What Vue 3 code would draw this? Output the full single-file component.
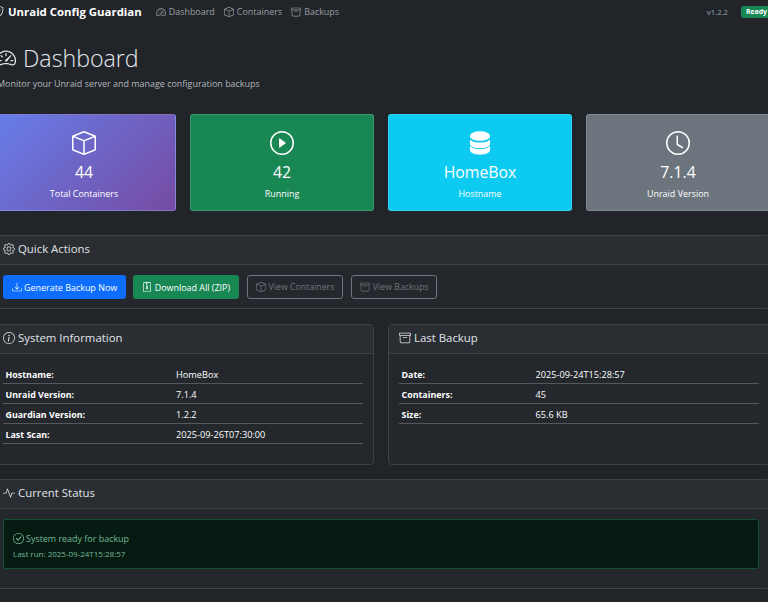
<script setup>
import { h } from 'vue'

const ring = 'M8 15A7 7 0 1 1 8 1a7 7 0 0 1 0 14zm0 1A8 8 0 1 0 8 0a8 8 0 0 0 0 16z'
const paths = {
  shield: ['M5.338 1.59a61.44 61.44 0 0 0-2.837.856.481.481 0 0 0-.328.39c-.554 4.157.726 7.19 2.253 9.188a10.725 10.725 0 0 0 2.287 2.233c.346.244.652.42.893.533.12.057.218.095.293.118a.55.55 0 0 0 .101.025.615.615 0 0 0 .1-.025c.076-.023.174-.061.294-.118.24-.113.547-.29.893-.533a10.726 10.726 0 0 0 2.287-2.233c1.527-1.997 2.807-5.031 2.253-9.188a.48.48 0 0 0-.328-.39c-.651-.213-1.75-.56-2.837-.855C9.552 1.29 8.531 1.067 8 1.067c-.53 0-1.552.223-2.662.524zM5.072.56C6.157.265 7.31 0 8 0s1.843.265 2.928.56c1.11.3 2.229.655 2.887.87a1.54 1.54 0 0 1 1.044 1.262c.596 4.477-.787 7.795-2.465 9.99a11.775 11.775 0 0 1-2.517 2.453 7.159 7.159 0 0 1-1.048.625c-.28.132-.581.24-.829.24s-.548-.108-.829-.24a7.158 7.158 0 0 1-1.048-.625 11.777 11.777 0 0 1-2.517-2.453C1.928 10.487.545 7.169 1.141 2.692A1.54 1.54 0 0 1 2.185 1.43 62.456 62.456 0 0 1 5.072.56z', 'M10.854 5.146a.5.5 0 0 1 0 .708l-3 3a.5.5 0 0 1-.708 0l-1.5-1.5a.5.5 0 1 1 .708-.708L7.5 7.793l2.646-2.647a.5.5 0 0 1 .708 0z'],
  speed: ['M8 4a.5.5 0 0 1 .5.5V6a.5.5 0 0 1-1 0V4.5A.5.5 0 0 1 8 4zM3.732 5.732a.5.5 0 0 1 .707 0l.915.914a.5.5 0 1 1-.708.708l-.914-.915a.5.5 0 0 1 0-.707zM2 10a.5.5 0 0 1 .5-.5h1.586a.5.5 0 0 1 0 1H2.5A.5.5 0 0 1 2 10zm9.5 0a.5.5 0 0 1 .5-.5h1.5a.5.5 0 0 1 0 1H12a.5.5 0 0 1-.5-.5zm.754-4.246a.389.389 0 0 0-.527-.02L7.547 9.31a.91.91 0 1 0 1.302 1.258l3.434-4.297a.389.389 0 0 0-.029-.518z', 'M0 10a8 8 0 1 1 15.547 2.661c-.442 1.253-1.845 1.602-2.932 1.25C11.309 13.488 9.475 13 8 13c-1.474 0-3.31.488-4.615.911-1.087.352-2.49.003-2.932-1.25A7.988 7.988 0 0 1 0 10zm8-7a7 7 0 0 0-6.603 9.329c.203.575.923.876 1.68.63C4.397 12.533 6.358 12 8 12s3.604.532 4.923.96c.757.245 1.477-.056 1.68-.631A7 7 0 0 0 8 3z'],
  box: ['M8.186 1.113a.5.5 0 0 0-.372 0L1.846 3.5 8 5.961 14.154 3.5 8.186 1.113zM15 4.239l-6.5 2.6v7.922l6.5-2.6V4.24zM7.5 14.762V6.838L1 4.239v7.925l6.5 2.6zM7.443.184a1.5 1.5 0 0 1 1.114 0l7.129 2.852A.5.5 0 0 1 16 3.5v8.662a1 1 0 0 1-.629.928l-7.185 2.874a.5.5 0 0 1-.372 0L.63 13.09a1 1 0 0 1-.63-.928V3.5a.5.5 0 0 1 .314-.464L7.443.184z'],
  archive: ['M0 2a1 1 0 0 1 1-1h14a1 1 0 0 1 1 1v2a1 1 0 0 1-1 1v7.5a2.5 2.5 0 0 1-2.5 2.5h-9A2.5 2.5 0 0 1 1 12.5V5a1 1 0 0 1-1-1V2zm2 3v7.5A1.5 1.5 0 0 0 3.5 14h9a1.5 1.5 0 0 0 1.5-1.5V5H2zm13-3H1v2h14V2zM5 7.5a.5.5 0 0 1 .5-.5h5a.5.5 0 0 1 0 1h-5a.5.5 0 0 1-.5-.5z'],
  play: [ring, 'M6.271 5.055a.5.5 0 0 1 .52.038l3.5 2.5a.5.5 0 0 1 0 .814l-3.5 2.5A.5.5 0 0 1 6 10.5v-5a.5.5 0 0 1 .271-.445z'],
  db: ['M8 .2C4.3.2 1.3 1.6 1.3 3.4S4.3 6.6 8 6.6s6.7-1.4 6.7-3.2S11.7.2 8 .2Z', 'M1.3 5.6v2.9c0 1.7 3 3 6.7 3s6.7-1.3 6.7-3V5.6C13.3 7.2 10.9 7.7 8 7.7S2.7 7.2 1.3 5.6Z', 'M1.3 9.9v2.8c0 1.8 3 3.1 6.7 3.1s6.7-1.3 6.7-3.1V9.9C13.3 11.5 10.9 12.2 8 12.2S2.7 11.5 1.3 9.9Z'],
  clock: ['M8 3.5a.5.5 0 0 0-1 0V9a.5.5 0 0 0 .252.434l3.5 2a.5.5 0 0 0 .496-.868L8 8.71V3.5z', 'M8 16A8 8 0 1 0 8 0a8 8 0 0 0 0 16zm7-8A7 7 0 1 1 1 8a7 7 0 0 1 14 0z'],
  gear: ['M8 4.754a3.246 3.246 0 1 0 0 6.492 3.246 3.246 0 0 0 0-6.492zM5.754 8a2.246 2.246 0 1 1 4.492 0 2.246 2.246 0 0 1-4.492 0z', 'M9.796 1.343c-.527-1.79-3.065-1.79-3.592 0l-.094.319a.873.873 0 0 1-1.255.52l-.292-.16c-1.64-.892-3.433.902-2.54 2.541l.159.292a.873.873 0 0 1-.52 1.255l-.319.094c-1.79.527-1.79 3.065 0 3.592l.319.094a.873.873 0 0 1 .52 1.255l-.16.292c-.892 1.64.901 3.434 2.541 2.54l.292-.159a.873.873 0 0 1 1.255.52l.094.319c.527 1.79 3.065 1.79 3.592 0l.094-.319a.873.873 0 0 1 1.255-.52l.292.16c1.64.893 3.434-.902 2.54-2.541l-.159-.292a.873.873 0 0 1 .52-1.255l.319-.094c1.79-.527 1.79-3.065 0-3.592l-.319-.094a.873.873 0 0 1-.52-1.255l.16-.292c.893-1.64-.902-3.433-2.541-2.54l-.292.159a.873.873 0 0 1-1.255-.52l-.094-.319zm-2.633.283c.246-.835 1.428-.835 1.674 0l.094.319a1.873 1.873 0 0 0 2.693 1.115l.291-.16c.764-.415 1.6.42 1.184 1.185l-.159.292a1.873 1.873 0 0 0 1.116 2.692l.318.094c.835.246.835 1.428 0 1.674l-.319.094a1.873 1.873 0 0 0-1.115 2.693l.16.291c.415.764-.42 1.6-1.185 1.184l-.291-.159a1.873 1.873 0 0 0-2.693 1.116l-.094.318c-.246.835-1.428.835-1.674 0l-.094-.319a1.873 1.873 0 0 0-2.692-1.115l-.292.16c-.764.415-1.6-.42-1.184-1.185l.159-.291A1.873 1.873 0 0 0 1.945 8.93l-.319-.094c-.835-.246-.835-1.428 0-1.674l.319-.094A1.873 1.873 0 0 0 3.06 4.377l-.16-.292c-.415-.764.42-1.6 1.185-1.184l.292.159a1.873 1.873 0 0 0 2.692-1.115l.094-.319z'],
  download: ['M.5 9.9a.5.5 0 0 1 .5.5v2.5a1 1 0 0 0 1 1h12a1 1 0 0 0 1-1v-2.5a.5.5 0 0 1 1 0v2.5a2 2 0 0 1-2 2H2a2 2 0 0 1-2-2v-2.5a.5.5 0 0 1 .5-.5z', 'M7.646 11.854a.5.5 0 0 0 .708 0l3-3a.5.5 0 0 0-.708-.708L8.5 10.293V1.5a.5.5 0 0 0-1 0v8.793L5.354 8.146a.5.5 0 1 0-.708.708l3 3z'],
  zip: ['M6.5 7.5a1 1 0 0 1 1-1h1a1 1 0 0 1 1 1v.938l.4 1.599a1 1 0 0 1-.416 1.074l-.93.62a1 1 0 0 1-1.109 0l-.93-.62a1 1 0 0 1-.415-1.074l.4-1.599V7.5zm2 0h-1v.938a1 1 0 0 1-.03.243l-.4 1.598.93.62.93-.62-.4-1.598a1 1 0 0 1-.03-.243V7.5z', 'M2 2a2 2 0 0 1 2-2h8a2 2 0 0 1 2 2v12a2 2 0 0 1-2 2H4a2 2 0 0 1-2-2V2zm5.5-1H4a1 1 0 0 0-1 1v12a1 1 0 0 0 1 1h8a1 1 0 0 0 1-1V2a1 1 0 0 0-1-1H9v1H8v1h1v1H8v1h1v1H7.5V5h-1V4h1V3h-1V2h1V1z'],
  info: [ring, 'm8.93 6.588-2.29.287-.082.38.45.083c.294.07.352.176.288.469l-.738 3.468c-.194.897.105 1.319.808 1.319.545 0 1.178-.252 1.465-.598l.088-.416c-.2.176-.492.246-.686.246-.275 0-.375-.193-.304-.533L8.93 6.588zM9 4.5a1 1 0 1 1-2 0 1 1 0 0 1 2 0z'],
  activity: ['M6 2a.5.5 0 0 1 .47.33L10 12.036l1.53-4.208A.5.5 0 0 1 12 7.5h3.5a.5.5 0 0 1 0 1h-3.15l-1.88 5.17a.5.5 0 0 1-.94 0L6 3.964 4.47 8.171A.5.5 0 0 1 4 8.5H.5a.5.5 0 0 1 0-1h3.15l1.88-5.17A.5.5 0 0 1 6 2Z'],
  check: [ring, 'M10.97 4.97a.235.235 0 0 0-.02.022L7.477 9.417 5.384 7.323a.75.75 0 0 0-1.06 1.06L6.97 11.03a.75.75 0 0 0 1.079-.02l3.992-4.99a.75.75 0 0 0-1.071-1.05z']
}

const Icon = (props) => h('svg', { viewBox: '0 0 16 16', fill: 'currentColor', 'fill-rule': 'evenodd' },
  paths[props.name].map((d) => h('path', { d })))
Icon.props = ['name']

const navItems = [
  { icon: 'speed', label: 'Dashboard' },
  { icon: 'box', label: 'Containers' },
  { icon: 'archive', label: 'Backups' }
]
const stats = [
  { icon: 'box', value: '44', label: 'Total Containers', tone: 'grad' },
  { icon: 'play', value: '42', label: 'Running', tone: 'green' },
  { icon: 'db', value: 'HomeBox', label: 'Hostname', tone: 'cyan' },
  { icon: 'clock', value: '7.1.4', label: 'Unraid Version', tone: 'grey' }
]
const actions = [
  { icon: 'download', label: 'Generate Backup Now', tone: 'blue' },
  { icon: 'zip', label: 'Download All (ZIP)', tone: 'dl' },
  { icon: 'box', label: 'View Containers', tone: 'ghost' },
  { icon: 'archive', label: 'View Backups', tone: 'ghost' }
]
const sysRows = [
  ['Hostname:', 'HomeBox'],
  ['Unraid Version:', '7.1.4'],
  ['Guardian Version:', '1.2.2'],
  ['Last Scan:', '2025-09-26T07:30:00']
]
const backupRows = [
  ['Date:', '2025-09-24T15:28:57'],
  ['Containers:', '45'],
  ['Size:', '65.6 KB']
]
</script>

<template>
  <div class="viewport">
    <div class="page">
      <nav class="nav">
        <div class="brand"><Icon name="shield" class="brand-ic" /><span>Unraid Config Guardian</span></div>
        <a v-for="n in navItems" :key="n.label" class="nav-link"><Icon :name="n.icon" class="nav-ic" />{{ n.label }}</a>
        <span class="version">v1.2.2</span>
        <span class="badge">Ready</span>
      </nav>

      <header class="head">
        <h1><Icon name="speed" class="h1-ic" />Dashboard</h1>
        <p>Monitor your Unraid server and manage configuration backups</p>
      </header>

      <section class="stats">
        <div v-for="s in stats" :key="s.label" class="stat" :class="s.tone">
          <Icon :name="s.icon" class="stat-ic" />
          <div class="stat-val">{{ s.value }}</div>
          <div class="stat-lab">{{ s.label }}</div>
        </div>
      </section>

      <section class="card wide">
        <h2 class="card-head"><Icon name="gear" class="head-ic" />Quick Actions</h2>
        <div class="actions">
          <button v-for="a in actions" :key="a.label" class="btn" :class="a.tone"><Icon :name="a.icon" class="btn-ic" />{{ a.label }}</button>
        </div>
      </section>

      <section class="pair">
        <div class="card">
          <h2 class="card-head"><Icon name="info" class="head-ic" />System Information</h2>
          <div class="card-body">
            <div v-for="r in sysRows" :key="r[0]" class="row"><b>{{ r[0] }}</b><span>{{ r[1] }}</span></div>
          </div>
        </div>
        <div class="card">
          <h2 class="card-head"><Icon name="archive" class="head-ic" />Last Backup</h2>
          <div class="card-body">
            <div v-for="r in backupRows" :key="r[0]" class="row alt"><b>{{ r[0] }}</b><span>{{ r[1] }}</span></div>
          </div>
        </div>
      </section>

      <section class="card wide status">
        <h2 class="card-head"><Icon name="activity" class="head-ic" />Current Status</h2>
        <div class="status-wrap">
          <div class="alert">
            <div class="alert-main"><Icon name="check" class="alert-ic" />System ready for backup</div>
            <div class="alert-sub">Last run: 2025-09-24T15:28:57</div>
          </div>
        </div>
      </section>
    </div>
  </div>
</template>

<style>
html, body { margin: 0; background: #212529; }
</style>

<style scoped>
.viewport {
  width: 768px;
  height: 602px;
  overflow: hidden;
  background: #212529;
  color: #dee2e6;
  font-family: "Open Sans", "Noto Sans", sans-serif;
  font-size: 8.95px;
}
.page { width: 778px; margin-left: -8px; }
svg { display: inline-block; flex: none; }

.nav { display: flex; align-items: center; height: 24px; box-sizing: border-box; padding: 0 0 1px 1px; }
.brand { display: flex; align-items: center; gap: 4px; font-size: 11.4px; font-weight: 700; color: #fff; margin-right: 14px; }
.brand-ic { width: 11px; height: 11px; }
.nav-link { display: flex; align-items: center; gap: 3px; margin-right: 9px; color: #9b9fa3; }
.nav-ic { width: 10px; height: 10px; }
.version { margin-left: auto; margin-right: 13px; font-size: 7.6px; font-weight: 600; color: #7d8790; }
.badge { background: #198754; color: #fff; font-size: 6.9px; line-height: 12px; font-weight: 700; padding: 0 5px; border-radius: 3px; margin-right: -2px; }

.head { padding: 18px 0 0 5px; height: 90px; box-sizing: border-box; }
h1 { display: flex; align-items: center; gap: 7px; margin: 0; font-size: 23.2px; line-height: 32px; font-weight: 300; color: #e4e8ec; }
.h1-ic { width: 20px; height: 20px; margin-left: -1px; }
.head p { margin: 3px 0 0; line-height: 14px; color: #b3b7bb; }

.stats { display: grid; grid-template-columns: repeat(4, 1fr); gap: 14px; }
.stat {
  height: 97px;
  box-sizing: border-box;
  border: 1px solid rgba(255,255,255,.15);
  border-radius: 3px;
  display: flex;
  flex-direction: column;
  align-items: center;
  padding-top: 16px;
  color: #fff;
}
.grad { background: linear-gradient(135deg, #667eea, #764ba2); }
.green { background: #198754; }
.cyan { background: #0dcaf0; }
.grey { background: #6c757d; }
.stat-ic { width: 24px; height: 24px; }
.stat-val { font-size: 15.8px; line-height: 22px; margin-top: 6px; }
.stat-lab { line-height: 14px; margin-top: 4px; }

.card { background: #24282d; border: 1px solid #3e4246; border-radius: 4px; box-sizing: border-box; }
.wide { margin-top: 24px; }
.status { margin-top: 14px; }
.card-head {
  display: flex;
  align-items: center;
  gap: 3px;
  margin: 0;
  padding: 0 10px 3px;
  height: 29px;
  box-sizing: border-box;
  background: #2a2e33;
  border-bottom: 1px solid #3e4246;
  font-size: 11.4px;
  font-weight: 400;
  color: #e0e4e8;
}
.head-ic { width: 12px; height: 12px; }

.actions { display: flex; gap: 7px; padding: 10px; height: 43px; box-sizing: border-box; }
.btn {
  display: inline-flex;
  align-items: center;
  gap: 2.5px;
  height: 24px;
  padding: 0 8px;
  border: 1px solid transparent;
  border-radius: 3px;
  font: inherit;
  color: #fff;
  background: none;
}
.btn-ic { width: 10px; height: 10px; }
.blue { background: #0d6efd; gap: 2px; }
.dl { background: #198754; }
.ghost { border-color: #6c757d; color: #6c757d; margin-left: 1px; font-size: 8.75px; }

.pair { display: grid; grid-template-columns: 1fr 1fr; gap: 14px; margin-top: 15px; }
.pair .card { height: 141px; }
.card-body { padding: 10px; }
.row {
  display: flex;
  align-items: center;
  height: 20px;
  padding-top: 1px;
  border-bottom: 1px solid #54585c;
  box-sizing: border-box;
  color: #fff;
  font-size: 9.2px;
}
.row b { width: 173px; flex: none; padding-left: 2.5px; font-size: 8.9px; font-weight: 700; box-sizing: border-box; }
.alt b { width: 136.5px; }

.status-wrap { padding: 10px; height: 79px; box-sizing: border-box; }
.alert {
  height: 50px;
  box-sizing: border-box;
  padding: 12px 9px;
  background: #051b11;
  border: 1px solid #0f5132;
  border-radius: 3px;
  color: #75b798;
}
.alert-main { display: flex; align-items: center; gap: 2px; line-height: 13px; }
.alert-ic { width: 11px; height: 11px; }
.alert-sub { font-size: 8px; line-height: 11px; margin-top: 3px; }
</style>
